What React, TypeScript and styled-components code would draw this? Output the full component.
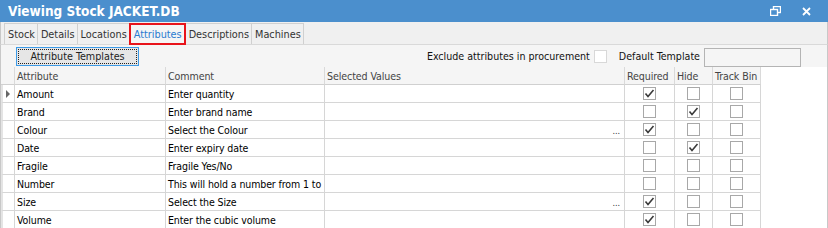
import React from 'react';
import styled, { createGlobalStyle } from 'styled-components';

const GlobalStyle = createGlobalStyle`
  html, body {
    margin: 0;
    padding: 0;
    background: #ffffff;
  }
  body {
    font-family: 'DejaVu Sans Condensed', 'Liberation Sans', Arial, sans-serif;
    font-stretch: condensed;
    font-size: 10.6px;
    color: #000;
  }
`;

interface Attr {
  name: string;
  comment: string;
  hasValues?: boolean;
  required?: boolean;
  hide?: boolean;
  trackBin?: boolean;
}

const attributes: Attr[] = [
  { name: 'Amount', comment: 'Enter quantity', required: true },
  { name: 'Brand', comment: 'Enter brand name', hide: true },
  { name: 'Colour', comment: 'Select the Colour', hasValues: true, required: true },
  { name: 'Date', comment: 'Enter expiry date', hide: true },
  { name: 'Fragile', comment: 'Fragile Yes/No' },
  { name: 'Number', comment: 'This will hold a number from 1 to' },
  { name: 'Size', comment: 'Select the Size', hasValues: true, required: true },
  { name: 'Volume', comment: 'Enter the cubic volume', required: true },
];

const tabs = ['Stock', 'Details', 'Locations', 'Attributes', 'Descriptions', 'Machines'];

const COLUMNS = '14px 151px 159px 300px 50px 38px 48px';

export default function App() {
  return (
    <>
      <GlobalStyle />
      <Window>
        <TitleBar>
          <Title>Viewing Stock JACKET.DB</Title>
          <TitleButtons>
            <svg width="11" height="10" viewBox="0 0 11 10">
              <rect x="3.5" y="0.5" width="7" height="6" fill="none" stroke="#fff" strokeWidth="1.4" />
              <rect x="0.5" y="3.5" width="7" height="6" fill="#4b8fcd" stroke="#fff" strokeWidth="1.4" />
            </svg>
            <svg width="9" height="9" viewBox="0 0 9 9">
              <path d="M1 1 L8 8 M8 1 L1 8" stroke="#fff" strokeWidth="1.8" />
            </svg>
          </TitleButtons>
        </TitleBar>

        <TabStrip>
          {tabs.map((t) => (
            <Tab key={t} $active={t === 'Attributes'}>
              {t}
            </Tab>
          ))}
        </TabStrip>

        <Panel>
          <Toolbar>
            <TemplateButton>
              <span>Attribute Templates</span>
            </TemplateButton>
            <Spacer />
            <Label>Exclude attributes in procurement</Label>
            <CheckBox $small />
            <Label style={{ marginLeft: 12 }}>Default Template</Label>
            <TextBox />
          </Toolbar>

          <Grid>
            <HeaderCell />
            <HeaderCell>Attribute</HeaderCell>
            <HeaderCell>Comment</HeaderCell>
            <HeaderCell>Selected Values</HeaderCell>
            <HeaderCell>Required</HeaderCell>
            <HeaderCell>Hide</HeaderCell>
            <HeaderCell>Track Bin</HeaderCell>

            {attributes.map((a, i) => (
              <React.Fragment key={a.name}>
                <IndicatorCell>{i === 0 && <Pointer />}</IndicatorCell>
                <Cell>{a.name}</Cell>
                <Cell>{a.comment}</Cell>
                <Cell $align="flex-end">{a.hasValues && <Ellipsis>...</Ellipsis>}</Cell>
                <Cell $align="center">
                  <CheckBox>{a.required && <Tick />}</CheckBox>
                </Cell>
                <Cell $align="center">
                  <CheckBox>{a.hide && <Tick />}</CheckBox>
                </Cell>
                <Cell $align="center">
                  <CheckBox>{a.trackBin && <Tick />}</CheckBox>
                </Cell>
              </React.Fragment>
            ))}
          </Grid>
        </Panel>
      </Window>
    </>
  );
}

function Tick() {
  return (
    <svg width="11" height="11" viewBox="0 0 11 11">
      <path d="M1.5 5.5 L4 8.5 L9.5 2" fill="none" stroke="#3a3a3a" strokeWidth="1.6" />
    </svg>
  );
}

const Window = styled.div`
  width: 828px;
  height: 228px;
  overflow: hidden;
  display: flex;
  flex-direction: column;
  background: #f5f5f5;
`;

const TitleBar = styled.div`
  height: 22px;
  flex: none;
  background: #4b8fcd;
  display: flex;
  align-items: center;
  padding: 0 17px 0 8px;
`;

const Title = styled.div`
  flex: 1;
  color: #fff;
  font-weight: bold;
  font-size: 13.5px;
`;

const TitleButtons = styled.div`
  display: flex;
  align-items: center;
  gap: 21px;
`;

const TabStrip = styled.div`
  height: 23px;
  flex: none;
  box-sizing: border-box;
  background: #f0f0f0;
  border-bottom: 1px solid #d9d9d9;
  border-left: 1px solid #c8c8c8;
  border-right: 1px solid #c8c8c8;
  display: flex;
  align-items: flex-end;
  padding-left: 4px;
`;

const Tab = styled.div<{ $active?: boolean }>`
  height: ${(p) => (p.$active ? '22px' : '21px')};
  box-sizing: border-box;
  padding: 0 2px 0 3px;
  display: flex;
  align-items: center;
  font-size: 10.8px;
  color: ${(p) => (p.$active ? '#2a7bd0' : '#333')};
  background: ${(p) => (p.$active ? '#f5f5f5' : '#f0f0f0')};
  border: ${(p) => (p.$active ? '2px solid #e8141b' : '1px solid #d0d0d0')};
  border-bottom: ${(p) => (p.$active ? '2px solid #e8141b' : 'none')};
  margin-left: -1px;
  margin-bottom: ${(p) => (p.$active ? '-1px' : '0')};
  position: relative;
  z-index: ${(p) => (p.$active ? 1 : 0)};
`;

const Panel = styled.div`
  flex: 1;
  display: flex;
  flex-direction: column;
  border-left: 1px solid #c8c8c8;
  border-right: 1px solid #c8c8c8;
  background: #ffffff;
`;

const Toolbar = styled.div`
  height: 22px;
  flex: none;
  display: flex;
  align-items: center;
  background: #f5f5f5;
  padding: 0 26px 0 15px;
`;

const TemplateButton = styled.button`
  height: 19px;
  width: 123px;
  padding: 1px;
  margin-top: 1px;
  box-sizing: border-box;
  border: 1px solid #3c9ae6;
  background: #e6e6e6;
  font-family: inherit;
  font-stretch: condensed;
  font-size: 10.7px;
  color: #222;
  display: flex;

  span {
    flex: 1;
    display: flex;
    align-items: center;
    justify-content: center;
    border: 1px dotted #222;
  }
`;

const Spacer = styled.div`
  flex: 1;
`;

const Label = styled.span`
  font-size: 10.6px;
  color: #111;
`;

const CheckBox = styled.div<{ $small?: boolean }>`
  width: 13px;
  height: 13px;
  box-sizing: border-box;
  border: 1px solid ${(p) => (p.$small ? '#d8d8d8' : '#a8a8a8')};
  background: #fff;
  margin-left: ${(p) => (p.$small ? '4px' : '0')};
  display: flex;
  align-items: center;
  justify-content: center;
`;

const TextBox = styled.div`
  width: 97px;
  height: 19px;
  box-sizing: border-box;
  margin-left: 4px;
  margin-top: 2px;
  border: 1px solid #b4b4b4;
  background: #f5f5f5;
`;

const Grid = styled.div`
  display: grid;
  grid-template-columns: ${COLUMNS};
  grid-auto-rows: 18px;
  background: #fff;
`;

const HeaderCell = styled.div`
  box-sizing: border-box;
  background: #f5f5f5;
  border-right: 1px solid #dadada;
  border-bottom: 1px solid #d0d0d0;
  padding-left: 2px;
  display: flex;
  align-items: center;
  font-size: 10.6px;
  letter-spacing: -0.1px;
  color: #444;
  white-space: nowrap;
  overflow: hidden;
`;

const Cell = styled.div<{ $align?: string }>`
  box-sizing: border-box;
  border-right: 1px solid #d6d6d6;
  border-bottom: 1px solid #d6d6d6;
  padding-left: ${(p) => (p.$align ? '0' : '2px')};
  display: flex;
  align-items: center;
  justify-content: ${(p) => p.$align ?? 'flex-start'};
  font-size: 10.5px;
  letter-spacing: -0.1px;
  color: #000;
  white-space: nowrap;
  overflow: hidden;
`;

const IndicatorCell = styled(Cell)`
  border-left: 2px solid #e4e4e4;
  padding-left: 3px;
`;

const Pointer = styled.div`
  width: 0;
  height: 0;
  border-top: 4px solid transparent;
  border-bottom: 4px solid transparent;
  border-left: 4px solid #666;
`;

const Ellipsis = styled.span`
  font-size: 9px;
  color: #333;
  padding-right: 4px;
  margin-top: 2px;
`;
